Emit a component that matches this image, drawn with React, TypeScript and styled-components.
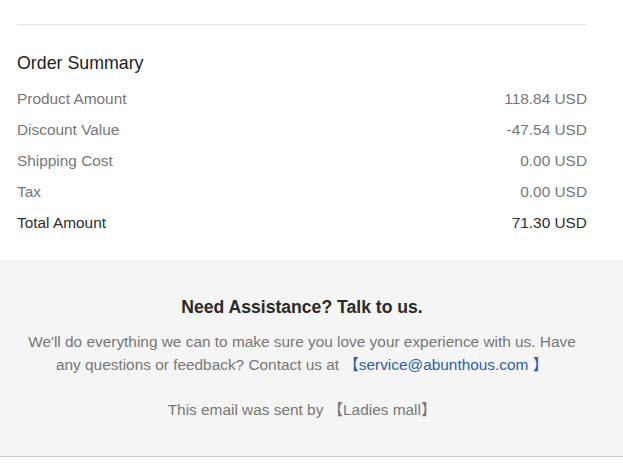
import React from "react";
import styled, { createGlobalStyle } from "styled-components";

const GlobalStyle = createGlobalStyle`
  html, body {
    margin: 0;
    padding: 0;
    background: #ffffff;
  }
  body {
    font-family: "Liberation Sans", Arial, "Noto Sans CJK SC", sans-serif;
  }
`;

const Page = styled.div`
  width: 623px;
  padding-top: 24px;
`;

const Inner = styled.div`
  padding: 0 36px 0 17px;
`;

const Divider = styled.hr`
  margin: 0;
  border: 0;
  height: 1px;
  background: #e6e6e6;
`;

const Summary = styled.div`
  padding: 26px 0 22px;
`;

const Title = styled.h3`
  margin: 0 0 8px;
  font-size: 17.8px;
  line-height: 24px;
  font-weight: normal;
  color: #222222;
`;

const Row = styled.div<{ $strong?: boolean }>`
  display: flex;
  justify-content: space-between;
  align-items: center;
  height: 31px;
  font-size: 15.4px;
  color: ${(p) => (p.$strong ? "#2e2e2e" : "#777777")};
`;

const Footer = styled.div`
  background: #f5f5f5;
  border-bottom: 1px solid #cccccc;
  padding: 35px 0 35px;
  text-align: center;
`;

const Heading = styled.h4`
  margin: 0 0 11px;
  font-size: 17.6px;
  line-height: 24px;
  font-weight: bold;
  color: #2a2a2a;
`;

const Text = styled.p<{ $gap?: number }>`
  margin: ${(p) => p.$gap ?? 0}px 0 0;
  font-size: 15.4px;
  line-height: 23px;
  color: #777777;
`;

const Link = styled.a`
  color: #2b5ea9;
  text-decoration: none;
`;

const rows = [
  { label: "Product Amount", value: "118.84 USD" },
  { label: "Discount Value", value: "-47.54 USD" },
  { label: "Shipping Cost", value: "0.00 USD" },
  { label: "Tax", value: "0.00 USD" },
  { label: "Total Amount", value: "71.30 USD", strong: true },
];

const App: React.FC = () => {
  return (
    <Page>
      <GlobalStyle />
      <Inner>
        <Divider />
        <Summary>
          <Title>Order Summary</Title>
          {rows.map((r) => (
            <Row key={r.label} $strong={r.strong}>
              <span>{r.label}</span>
              <span>{r.value}</span>
            </Row>
          ))}
        </Summary>
      </Inner>
      <Footer>
        <Inner>
          <Heading>Need Assistance? Talk to us.</Heading>
          <Text>
            We'll do everything we can to make sure you love your experience
            with us. Have any questions or feedback? Contact us at{" "}
            <Link href="#">【service@abunthous.com 】</Link>
          </Text>
          <Text $gap={22}>This email was sent by 【Ladies mall】</Text>
        </Inner>
      </Footer>
    </Page>
  );
};

export default App;
